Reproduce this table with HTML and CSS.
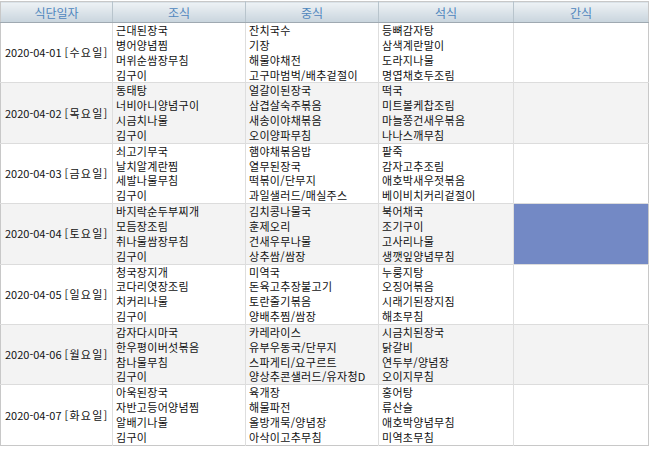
FILE: index.html
```html
<!DOCTYPE html>
<html lang="ko">
<head>
<meta charset="utf-8">
<link rel="stylesheet" href="styles.css">
</head>
<body>
<div class="wrap">
<table class="menu">
  <colgroup>
    <col class="c-date"><col class="c-meal"><col class="c-meal"><col class="c-meal2"><col class="c-meal2">
  </colgroup>
  <thead>
    <tr><th>식단일자</th><th>조식</th><th>중식</th><th>석식</th><th>간식</th></tr>
  </thead>
  <tbody>
    <tr>
      <td class="date">2020-04-01 <span class="day">[수요일]</span></td>
      <td>근대된장국<br>병어양념찜<br>머위순쌈장무침<br>김구이</td>
      <td>잔치국수<br>기장<br>해물야채전<br>고구마범벅/배추겉절이</td>
      <td>등뼈감자탕<br>삼색계란말이<br>도라지나물<br>명엽채호두조림</td>
      <td></td>
    </tr>
    <tr class="alt">
      <td class="date">2020-04-02 <span class="day">[목요일]</span></td>
      <td>동태탕<br>너비아니양념구이<br>시금치나물<br>김구이</td>
      <td>얼갈이된장국<br>삼겹살숙주볶음<br>새송이야채볶음<br>오이양파무침</td>
      <td>떡국<br>미트볼케찹조림<br>마늘쫑건새우볶음<br>나나스깨무침</td>
      <td></td>
    </tr>
    <tr>
      <td class="date">2020-04-03 <span class="day">[금요일]</span></td>
      <td>쇠고기무국<br>날치알계란찜<br>세발나물무침<br>김구이</td>
      <td>햄야채볶음밥<br>열무된장국<br>떡볶이/단무지<br>과일샐러드/매실주스</td>
      <td>팥죽<br>감자고추조림<br>애호박새우젓볶음<br>베이비치커리겉절이</td>
      <td></td>
    </tr>
    <tr class="alt">
      <td class="date">2020-04-04 <span class="day">[토요일]</span></td>
      <td>바지락순두부찌개<br>모듬장조림<br>취나물쌈장무침<br>김구이</td>
      <td>김치콩나물국<br>훈제오리<br>건새우무나물<br>상추쌈/쌈장</td>
      <td>북어채국<br>조기구이<br>고사리나물<br>생깻잎양념무침</td>
      <td class="sel"></td>
    </tr>
    <tr>
      <td class="date">2020-04-05 <span class="day">[일요일]</span></td>
      <td>청국장지개<br>코다리엿장조림<br>치커리나물<br>김구이</td>
      <td>미역국<br>돈육고추장불고기<br>토란줄기볶음<br>양배추찜/쌈장</td>
      <td>누룽지탕<br>오징어볶음<br>시래기된장지짐<br>해초무침</td>
      <td></td>
    </tr>
    <tr class="alt">
      <td class="date">2020-04-06 <span class="day">[월요일]</span></td>
      <td>감자다시마국<br>한우평이버섯볶음<br>참나물무침<br>김구이</td>
      <td>카레라이스<br>유부우동국/단무지<br>스파게티/요구르트<br>양상추콘샐러드/유자청D</td>
      <td>시금치된장국<br>닭갈비<br>연두부/양념장<br>오이지무침</td>
      <td></td>
    </tr>
    <tr>
      <td class="date">2020-04-07 <span class="day">[화요일]</span></td>
      <td>아욱된장국<br>자반고등어양념찜<br>알배기나물<br>김구이</td>
      <td>육개장<br>해물파전<br>올방개묵/양념장<br>아삭이고추무침</td>
      <td>홍어탕<br>류산슬<br>애호박양념무침<br>미역초무침</td>
      <td></td>
    </tr>
  </tbody>
</table>
</div>
</body>
</html>
```

FILE: styles.css
```css
html, body {
  margin: 0;
  padding: 0;
  background: #ffffff;
}

.wrap {
  width: 648px;
  padding-top: 1px;
}

.menu {
  width: 648px;
  border-collapse: collapse;
  table-layout: fixed;
  border: 1px solid #c8c8c8;
  font-family: "Noto Sans CJK KR", "Noto Sans", sans-serif;
  font-size: 11px;
  letter-spacing: 0.3px;
  color: #111;
}

.c-date { width: 112px; }
.c-meal { width: 133px; }
.c-meal2 { width: 135px; }

.menu th {
  height: 20px;
  padding: 0;
  font-weight: normal;
  font-size: 12px;
  letter-spacing: 0;
  color: #4f86bd;
  background: linear-gradient(#eef2f5, #c8d4dd);
  border-left: 1px solid #b8c4cc;
  border-bottom: 1px solid #9fa9b1;
  text-align: center;
  vertical-align: middle;
}

.menu th:first-child { border-left: none; }

.menu td {
  padding: 0 3px;
  line-height: 14.85px;
  vertical-align: middle;
  white-space: nowrap;
  overflow: hidden;
  border-left: 1px solid #dedede;
  border-top: 1px solid #dcdcdc;
}

.menu td:first-child { border-left: none; }

.menu td.date {
  padding-left: 4px;
  letter-spacing: 0;
}

.menu .day {
  letter-spacing: 1.2px;
}

.menu tr.alt td {
  background: #f3f3f3;
}

.menu tr.alt td.sel,
.menu td.sel {
  background: #7389c5;
}
```
